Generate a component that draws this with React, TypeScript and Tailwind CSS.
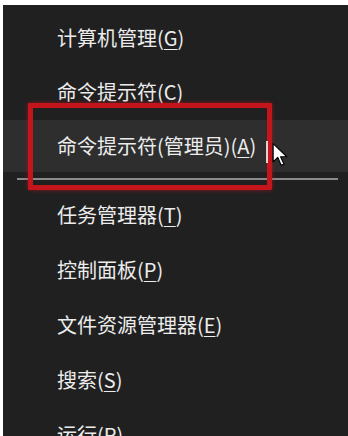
import React from "react";

type Item = { label: string; key: string };

const top: Item[] = [
  { label: "计算机管理", key: "G" },
  { label: "命令提示符", key: "C" },
  { label: "命令提示符(管理员)", key: "A" },
];
const bottom: Item[] = [
  { label: "任务管理器", key: "T" },
  { label: "控制面板", key: "P" },
  { label: "文件资源管理器", key: "E" },
  { label: "搜索", key: "S" },
  { label: "运行", key: "R" },
];

function Row({ item, active }: { item: Item; active?: boolean }) {
  return (
    <div
      className={
        "h-[52px] shrink-0 flex items-center pl-[54px] text-[20px] leading-none text-[#ececec] " +
        (active ? "bg-[#2e2e2e]" : "")
      }
    >
      <span>
        {item.label}(<span className="underline underline-offset-[3px] decoration-1">{item.key}</span>)
      </span>
    </div>
  );
}

export default function App() {
  return (
    <div
      className="w-[348px] h-[436px] bg-white pt-[5px] pl-[3px] overflow-hidden"
      style={{ fontFamily: '"Noto Sans CJK SC", "Noto Sans", sans-serif' }}
    >
      <div className="relative w-full h-full bg-[#202020] overflow-hidden">
        <div className="flex flex-col gap-[2px] pt-[7px]">
          {top.map((it, i) => (
            <Row key={it.label} item={it} active={i === 2} />
          ))}
        </div>
        <div className="mt-[6px] ml-[14px] mr-[10px] h-[2px] bg-[#8a8a8a]" />
        <div className="flex flex-col gap-[3px] mt-[9px]">
          {bottom.map((it) => (
            <Row key={it.label} item={it} />
          ))}
        </div>

        {/* red highlight box */}
        <div className="absolute left-[25px] top-[98px] w-[244px] h-[87px] border-[5px] border-[#c4151c] rounded-[1px] shadow-[0_0_4px_rgba(200,20,28,0.6)]" />

        {/* text caret-like bar */}
        <div className="absolute left-[263px] top-[136px] w-[2px] h-[22px] bg-[#e9cccc]" />

        {/* mouse cursor */}
        <svg
          className="absolute left-[269px] top-[137px]"
          width="16"
          height="26"
          viewBox="0 0 14 22"
        >
          <path
            d="M1 1 L1 17 L5 13 L8 20 L10.5 19 L7.5 12.5 L13 12.5 Z"
            fill="#ffffff"
            stroke="#000000"
            strokeWidth="1"
            strokeLinejoin="round"
          />
        </svg>
      </div>
    </div>
  );
}
